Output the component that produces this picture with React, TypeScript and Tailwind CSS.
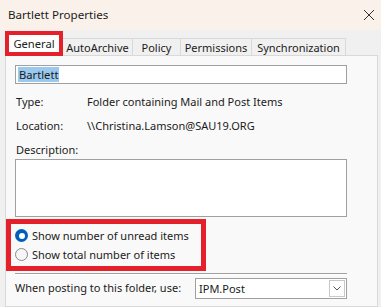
import React from 'react';

const font = { fontFamily: '"Noto Sans", "Segoe UI", sans-serif' };

function Tab({ label, w }: { label: string; w: string }) {
  return (
    <div
      className={`${w} h-[17px] mt-[7px] flex items-center justify-center border-t border-r border-[#d9d9d9] bg-[#f0f0f0] text-[11px] leading-none`}
    >
      {label}
    </div>
  );
}

function Radio({ checked, label }: { checked?: boolean; label: string }) {
  return (
    <div className="flex items-center h-[19px]">
      {checked ? (
        <div className="w-[13px] h-[13px] rounded-full bg-[#005fb8] flex items-center justify-center">
          <div className="w-[6px] h-[6px] rounded-full bg-white" />
        </div>
      ) : (
        <div className="w-[13px] h-[13px] rounded-full border border-[#8a8a8a] bg-[#f6f6f6]" />
      )}
      <span className="ml-[4px] text-[11px] leading-none">{label}</span>
    </div>
  );
}

export default function App() {
  return (
    <div
      className="w-[381px] h-[307px] overflow-hidden bg-[#f0f0f0] text-[#1b1b1b] flex flex-col"
      style={font}
    >
      {/* Title bar */}
      <div className="h-[30px] shrink-0 bg-[#faf2ea] flex items-center justify-between pl-[8px] pr-[5px]">
        <span className="text-[11.6px] leading-none">Bartlett Properties</span>
        <svg width="12" height="12" viewBox="0 0 12 12" className="mr-[1px]">
          <path d="M1 1 L11 11 M11 1 L1 11" stroke="#333" strokeWidth="1" />
        </svg>
      </div>

      {/* Tabs */}
      <div className="flex pl-[5px] h-[25px] shrink-0 mt-[1px]">
        <div className="w-[58px] h-[25px] border-[4px] border-[#e4202b] bg-white flex items-center justify-center relative z-10">
          <span className="text-[11.2px] leading-none">General</span>
        </div>
        <div className="w-[70px] h-[17px] mt-[7px] flex items-center justify-center border-t border-r border-[#d9d9d9] bg-[#f0f0f0] text-[11px] leading-none">
          AutoArchive
        </div>
        <Tab label="Policy" w="w-[48px]" />
        <Tab label="Permissions" w="w-[71px]" />
        <Tab label="Synchronization" w="w-[94px]" />
      </div>

      {/* Panel */}
      <div className="ml-[5px] mr-[3px] flex-1 -mt-[1px] border border-[#d9d9d9] bg-[#f9f9f9] flex flex-col">
        <div className="ml-[9px] mt-[9px] w-[332px] h-[19px] border border-[#a0a0a0] bg-white flex items-center pl-[2px]">
          <span className="bg-[#99c9ef] text-[11.2px] leading-[15px] px-[1px]">Bartlett</span>
        </div>

        <div className="ml-[10px] mt-[9px] h-[18px] flex items-center text-[11px]">
          <span className="w-[71px]">Type:</span>
          <span>Folder containing Mail and Post Items</span>
        </div>
        <div className="ml-[10px] mt-[6px] h-[18px] flex items-center text-[11px]">
          <span className="w-[71px]">Location:</span>
          <span>\\Christina.Lamson@SAU19.ORG</span>
        </div>
        <div className="ml-[10px] mt-[6px] h-[18px] flex items-center text-[11px]">
          Description:
        </div>
        <div className="ml-[9px] mt-[0px] w-[332px] h-[58px] border border-[#a0a0a0] bg-white" />

        <div className="mt-[2px] ml-0 w-[200px] h-[52px] border-[5px] border-[#e4202b] flex flex-col justify-center pl-[4px]">
          <Radio checked label="Show number of unread items" />
          <Radio label="Show total number of items" />
        </div>

        <div className="ml-[9px] mt-[2px] w-[332px] h-[2px] border-t border-[#a0a0a0] border-b border-b-white" />

        <div className="ml-[9px] mt-[3px] flex items-center">
          <span className="w-[180px] text-[11px]">When posting to this folder, use:</span>
          <div className="w-[152px] h-[21px] border border-[#a0a0a0] bg-white flex items-center justify-between pl-[3px] pr-[1px]">
            <span className="text-[11px] leading-none">IPM.Post</span>
            <div className="w-[16px] h-[17px] border border-[#c8c8c8] flex items-center justify-center">
              <svg width="8" height="5" viewBox="0 0 8 5">
                <path d="M0.5 0.5 L4 4 L7.5 0.5" stroke="#555" fill="none" strokeWidth="1" />
              </svg>
            </div>
          </div>
        </div>
      </div>
    </div>
  );
}
